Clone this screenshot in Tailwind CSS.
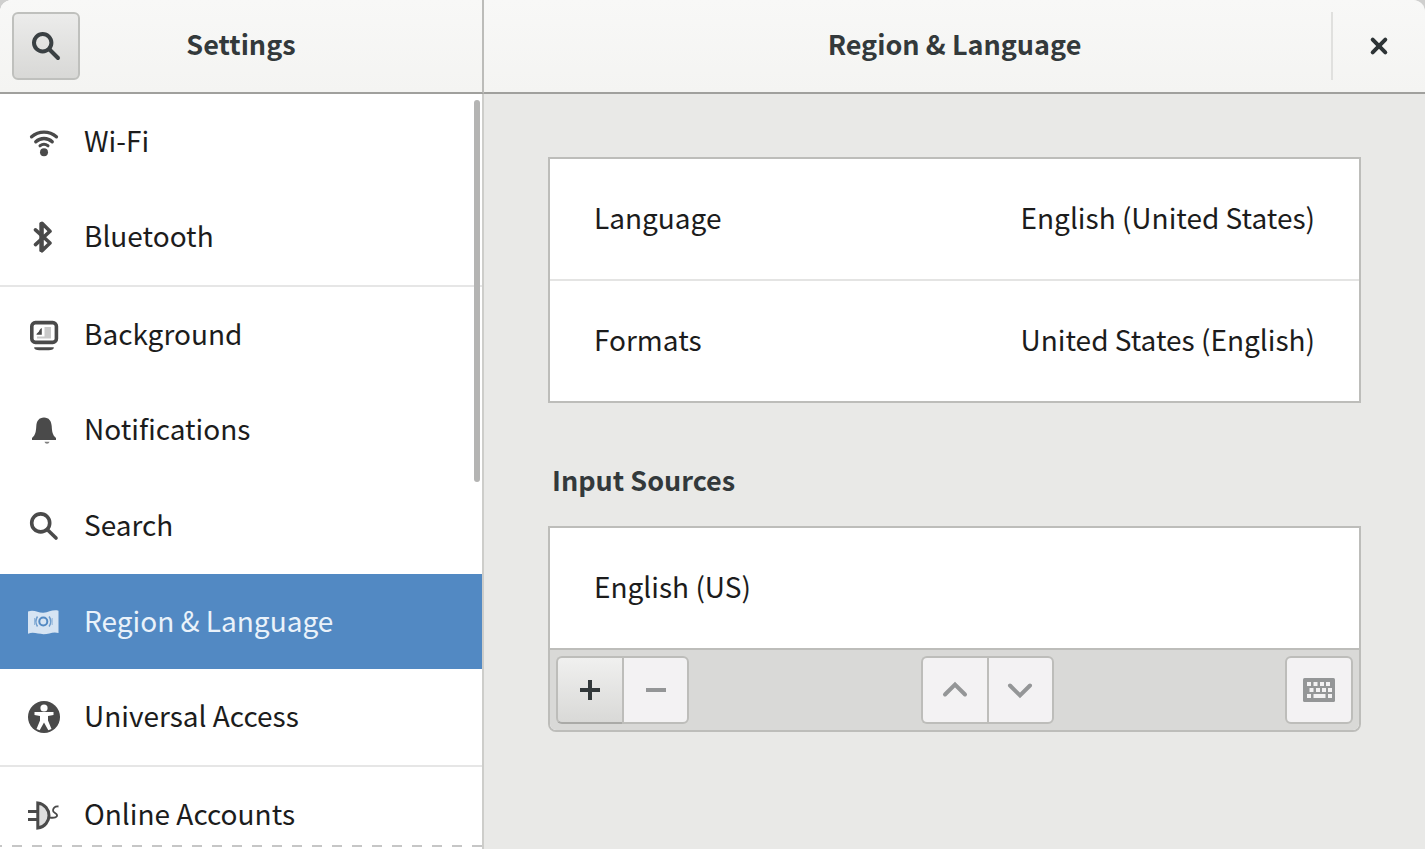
<!DOCTYPE html>
<html lang="en">
<head>
<meta charset="utf-8">
<meta name="viewport" content="width=device-width, initial-scale=1">
<title>Settings</title>
<script src="https://cdn.jsdelivr.net/npm/@tailwindcss/browser@4"></script>
</head>
<body class="bg-[#cfcfce] font-['Noto_Sans_CJK_SC',sans-serif] text-[28px] leading-10 text-[#1c1c1c]">
<div class="flex h-screen overflow-hidden rounded-t-xl bg-[#e9e9e7]">

  <!-- Sidebar -->
  <aside class="flex w-[484px] shrink-0 flex-col border-r-2 border-[#cdcdca] bg-white">
    <header class="-mr-[2px] grid h-[94px] shrink-0 grid-cols-[1fr_auto_1fr] items-center border-r-2 border-b-2 border-r-[#bcbcb9] border-b-[#a0a09d] bg-linear-to-b from-[#f8f8f7] to-[#f4f4f2] px-3">
      <button type="button" aria-label="Search settings" class="grid size-[68px] place-items-center rounded-md border-2 border-[#bfc0bd] bg-linear-to-b from-[#ececeb] to-[#d8d8d6] text-[#3a4043]">
        <svg class="size-8" viewBox="0 0 32 32" fill="none" stroke="currentColor" stroke-width="4" stroke-linecap="round"><circle cx="12.7" cy="12.7" r="8.7"/><path d="M19.5 19.5 28 28"/></svg>
      </button>
      <h1 class="pb-1 text-[27px] font-bold text-[#33393b]">Settings</h1>
    </header>

    <div class="relative min-h-0 flex-1 overflow-hidden">
      <nav aria-label="Settings panels" class="text-[#4a4a4a]">
        <div class="flex h-[191px] flex-col">
          <a href="#wifi" class="flex flex-1 items-center gap-6 px-7">
            <svg class="size-8" viewBox="0 0 32 32" fill="none" stroke="currentColor" stroke-width="3.4" stroke-linecap="round"><path d="M3.6 10.800C10.800 4.600 21.200 4.600 28.400 10.800"/><path d="M7.800 15.800C12.500 11.400 19.500 11.400 24.200 15.800"/><path d="M12 19.800C14.400 18 17.600 18 20 19.800" stroke-width="3"/><circle cx="16" cy="26.300" r="4" fill="currentColor" stroke="none"/></svg>
            <span class="pb-1 text-[#1c1c1c]">Wi-Fi</span>
          </a>
          <a href="#bluetooth" class="flex flex-1 items-center gap-6 px-7">
            <svg class="size-8" viewBox="0 0 32 32" fill="none" stroke="currentColor" stroke-width="3.6" stroke-linejoin="round" stroke-linecap="round"><path d="M7.5 8.8 22 22 14 29.8V2.2L22 10.2 7.5 23.6"/><path d="M12.8 2.5v27" stroke-width="3"/></svg>
            <span class="pb-1 text-[#1c1c1c]">Bluetooth</span>
          </a>
        </div>
        <div class="flex h-[482px] flex-col border-y-2 border-[#e6e6e6]">
          <a href="#background" class="flex flex-1 items-center gap-6 px-7">
            <svg class="size-8" viewBox="0 0 32 32"><rect x="3.8" y="3.6" width="24.6" height="19.8" rx="3.6" fill="#fff" stroke="currentColor" stroke-width="3.6"/><path d="M6.5 28.2h19c.6 0 .6 1.3-1 2.2-4 1.2-13 1.2-17 0-1.600-.9-1.600-2.200-1-2.200z" fill="currentColor"/><path d="M8.400 15.800c.5-2 1.600-2 2.400-3 .6-1.200 1.200-3.200 3-3.800v6.800z" fill="currentColor"/><path d="M16.500 8h6.500v11.500h-14v-2h7.500z" fill="#c9c9c9"/></svg>
            <span class="pb-1 text-[#1c1c1c]">Background</span>
          </a>
          <a href="#notifications" class="flex flex-1 items-center gap-6 px-7">
            <svg class="size-8" viewBox="0 0 32 32" fill="currentColor"><path d="M16 3.500c-5 0-7.300 3.500-7.700 8.500C8 17.500 7.500 21 4 24v2h24v-2c-3.500-3-4-6.500-4.300-12C23.300 7 21 3.500 16 3.500z"/><path d="M16.500 27.800h5c-.6 2.600-4.400 2.600-5 0z" opacity=".7"/></svg>
            <span class="pb-1 text-[#1c1c1c]">Notifications</span>
          </a>
          <a href="#search" class="flex flex-1 items-center gap-6 px-7">
            <svg class="size-8" viewBox="0 0 32 32" fill="none" stroke="currentColor" stroke-width="3.600" stroke-linecap="round"><circle cx="12.700" cy="12.900" r="9"/><path d="M19.500 19.700 28 28"/></svg>
            <span class="pb-1 text-[#1c1c1c]">Search</span>
          </a>
          <a href="#region" aria-current="page" class="flex flex-1 items-center gap-6 bg-[#5289c3] px-7 text-[#d6e4f3]">
            <svg class="size-8" viewBox="0 0 32 32"><path d="M0 5.500c6-2.500 10 1.500 15.500 1.200C21 6.400 25 3 30.500 4.800V27c-5.500-1.800-9.500 1.200-15 1.200S5.500 25.500 0 27.800z" fill="currentColor"/><g fill="none" stroke="#5289c3"><circle cx="15.300" cy="15.500" r="4" stroke-width="2"/><path d="M9.500 10.500c-2 3-2 7 0 10M21.100 10.500c2 3 2 7 0 10" stroke-width="1.500" opacity=".8"/><path d="M6.500 12v7M24.200 12v7" stroke-width="1" opacity=".5"/></g></svg>
            <span class="pb-1 text-[#eaf2fa]">Region &amp; Language</span>
          </a>
          <a href="#access" class="flex flex-1 items-center gap-6 px-7">
            <svg class="size-8" viewBox="0 0 32 32"><circle cx="16" cy="16" r="16" fill="currentColor"/><circle cx="16" cy="7" r="3.600" fill="#fff"/><path d="M6.500 11h19v3l-5.500 1v4.500l3.500 8.500-3.200 1.300L16 21.500l-4.300 7.800L8.500 28l3.500-8.500V15l-5.500-1z" fill="#fff"/></svg>
            <span class="pb-1 text-[#1c1c1c]">Universal Access</span>
          </a>
        </div>
        <a href="#accounts" class="flex h-24 items-center gap-6 px-7">
          <svg class="size-8" viewBox="0 0 32 32" fill="none" stroke="currentColor" stroke-width="3"><path d="M9.800 4v25C17 28 21 22 21 16.500S17 5 9.800 4z" fill="#dedede"/><path d="M0 12.500h9M0 20.500h9"/><path d="M21.500 18.500c5 .8 8-.3 7.500-2.500-.5-2-4.500-2.200-4-4.800.4-2 2-4.200 5.500-3.700" stroke-width="1.800"/></svg>
          <span class="pb-1 text-[#1c1c1c]">Online Accounts</span>
        </a>
      </nav>
      <div class="absolute top-[6px] right-[2px] h-[382px] w-[6px] rounded-full bg-[#b4b4b3]"></div>
      <div class="absolute inset-x-0 bottom-[2px] h-[2px] bg-[repeating-linear-gradient(90deg,#c6c6c6_0_2px,transparent_2px_12px,#c6c6c6_12px_20px)]"></div>
    </div>
  </aside>

  <!-- Region & Language panel -->
  <div class="flex min-w-0 flex-1 flex-col">
    <header class="grid h-[94px] shrink-0 grid-cols-[1fr_auto_1fr] items-center border-b-2 border-[#a0a09d] bg-linear-to-b from-[#f8f8f7] to-[#f4f4f2]">
      <h2 class="col-start-2 pb-1 text-[27px] font-bold text-[#33393b]">Region &amp; Language</h2>
      <div class="flex h-[68px] w-[94px] items-center justify-self-end border-l-2 border-[#e0e0de]">
        <button type="button" aria-label="Close" class="grid h-full w-full place-items-center text-[#2e3436]">
          <svg class="size-8" viewBox="0 0 32 32" fill="none" stroke="currentColor" stroke-width="4" stroke-linecap="round"><path d="m9.700 9.700 12.600 12.600M22.300 9.700 9.700 22.300"/></svg>
        </button>
      </div>
    </header>

    <main class="px-16 pt-[63px]">
      <div class="border-2 border-[#bdbdba] bg-white">
        <button type="button" class="flex h-[120px] w-full items-center justify-between px-11 pb-1"><span>Language</span><span>English (United States)</span></button>
        <button type="button" class="flex h-[122px] w-full items-center justify-between border-t-2 border-[#e4e4e3] px-11 pb-1"><span>Formats</span><span>United States (English)</span></button>
      </div>

      <h3 class="mt-[57px] px-1 text-[27px] font-bold text-[#33393b]">Input Sources</h3>

      <div class="mt-[26px] overflow-hidden rounded-b-lg border-2 border-[#bdbdba] bg-white">
        <button type="button" class="flex h-[120px] w-full items-center px-11 pb-1">English (US)</button>
        <div class="flex items-center justify-between border-t-2 border-[#bdbdba] bg-[#d9d9d7] p-[6px]">
          <div class="flex">
            <button type="button" aria-label="Add input source" class="grid h-[68px] w-[66px] place-items-center rounded-l-md border-2 border-r-0 border-[#bdbdba] border-b-[#aaaaa7] bg-linear-to-b from-[#f0f0ef] to-[#d9d9d7] text-[#33393b]">
              <svg class="size-8" viewBox="0 0 32 32" fill="none" stroke="currentColor" stroke-width="4"><path d="M6 16h20M16 6v20"/></svg>
            </button>
            <button type="button" disabled aria-label="Remove input source" class="grid h-[68px] w-[67px] place-items-center rounded-r-md border-2 border-[#bdbdba] bg-[#f3f2f3] text-[#949697]">
              <svg class="size-8" viewBox="0 0 32 32" fill="none" stroke="currentColor" stroke-width="4"><path d="M6 16h20"/></svg>
            </button>
          </div>
          <div class="flex">
            <button type="button" disabled aria-label="Move up" class="grid h-[68px] w-[66px] place-items-center rounded-l-md border-2 border-r-0 border-[#bdbdba] bg-[#f3f2f3] text-[#949697]">
              <svg class="size-8" viewBox="0 0 32 32" fill="none" stroke="currentColor" stroke-width="4" stroke-linecap="round"><path d="M6 20.500 16 10.500 26 20.500"/></svg>
            </button>
            <button type="button" disabled aria-label="Move down" class="grid h-[68px] w-[67px] place-items-center rounded-r-md border-2 border-[#bdbdba] bg-[#f3f2f3] text-[#949697]">
              <svg class="size-8" viewBox="0 0 32 32" fill="none" stroke="currentColor" stroke-width="4" stroke-linecap="round"><path d="M6 11.500 16 21.500 26 11.500"/></svg>
            </button>
          </div>
          <button type="button" disabled aria-label="Show keyboard layout" class="grid size-[68px] place-items-center rounded-md border-2 border-[#bdbdba] bg-[#f3f2f3] text-[#949697]">
            <svg class="h-6 w-8" viewBox="0 0 32 24"><rect width="32" height="24" rx="1.500" fill="currentColor"/><path fill="#f3f2f3" d="M4 4h4v4H4zM10.500 4h4v4h-4zM17 4h4v4h-4zM23 4h4v4h-4zM6.500 10h4v4h-4zM13 10h4v4h-4zM19 10h4v4h-4zM25 10h4v4h-4zM4 16h4v4H4zM10.500 16h12v4h-12zM25 16h4v4h-4z"/></svg>
          </button>
        </div>
      </div>
    </main>
  </div>
</div>
</body>
</html>
